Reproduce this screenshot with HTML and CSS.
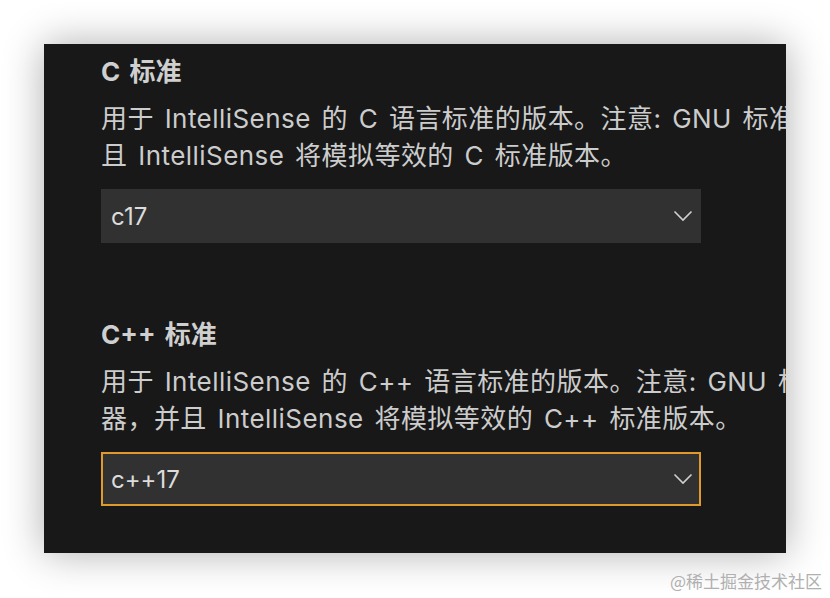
FILE: index.html
```html
<!DOCTYPE html>
<html lang="zh-CN">
<head>
<meta charset="utf-8">
<title>设置</title>
<link rel="stylesheet" href="styles.css">
</head>
<body>
<div class="stage">
  <div class="panel">
    <section class="setting">
      <div class="title">C 标准</div>
      <div class="desc">
        <div class="line">用于 IntelliSense 的 C 语言标准的版本。注意: GNU 标准仅用于查询设置编译器以获取 GNU 定义，并</div>
        <div class="line">且 IntelliSense 将模拟等效的 C 标准版本。</div>
      </div>
      <div class="select">
        <span class="value">c17</span>
        <svg class="chev" width="20" height="12" viewBox="0 0 20 12"><polyline points="1.5,1.5 10,10 18.5,1.5" fill="none" stroke="#d0d0d0" stroke-width="1.6"/></svg>
      </div>
    </section>
    <section class="setting second">
      <div class="title">C++ 标准</div>
      <div class="desc">
        <div class="line">用于 IntelliSense 的 C++ 语言标准的版本。注意: GNU 标准仅用于查询设置编译</div>
        <div class="line">器，并且 IntelliSense 将模拟等效的 C++ 标准版本。</div>
      </div>
      <div class="select focused">
        <span class="value">c++17</span>
        <svg class="chev" width="20" height="12" viewBox="0 0 20 12"><polyline points="1.5,1.5 10,10 18.5,1.5" fill="none" stroke="#d0d0d0" stroke-width="1.6"/></svg>
      </div>
    </section>
  </div>
  <div class="watermark">@稀土掘金技术社区</div>
</div>
</body>
</html>
```
FILE: styles.css
```css
html, body {
  margin: 0;
  padding: 0;
  background: #ffffff;
}
.stage {
  position: relative;
  width: 830px;
  height: 598px;
  overflow: hidden;
  padding: 44px 0 0 44px;
  box-sizing: border-box;
}
.panel {
  width: 742px;
  height: 509px;
  background: #181818;
  box-shadow: 0 0 38px rgba(0, 0, 0, 0.32);
  overflow: hidden;
  padding: 12px 0 0 57px;
  box-sizing: border-box;
  font-family: Inter, "Noto Sans CJK SC", sans-serif;
  color: #cccccc;
}
.setting {
  display: flex;
  flex-direction: column;
}
.setting.second {
  margin-top: 76px;
}
.title {
  font-size: 26px;
  line-height: 32px;
  font-weight: 700;
  color: #cfcfcf;
  white-space: nowrap;
  word-spacing: 3px;
}
.desc {
  margin-top: 12px;
  font-size: 26px;
  line-height: 37px;
  color: #cccccc;
  word-spacing: 3px;
  letter-spacing: 0.45px;
}
.line {
  white-space: nowrap;
}
.select {
  margin-top: 15px;
  width: 600px;
  height: 54px;
  box-sizing: border-box;
  background: #313131;
  border: 2px solid #313131;
  display: flex;
  align-items: center;
  justify-content: space-between;
  padding: 0 6px 0 8px;
  font-size: 24px;
  color: #dcdcdc;
}
.select.focused {
  border-color: #e09a2c;
}
.chev {
  display: block;
}
.watermark {
  position: absolute;
  right: 8px;
  bottom: 6px;
  font-family: "Noto Sans CJK SC", sans-serif;
  font-size: 17px;
  line-height: 22px;
  color: #b0b0b0;
  white-space: nowrap;
}
```
